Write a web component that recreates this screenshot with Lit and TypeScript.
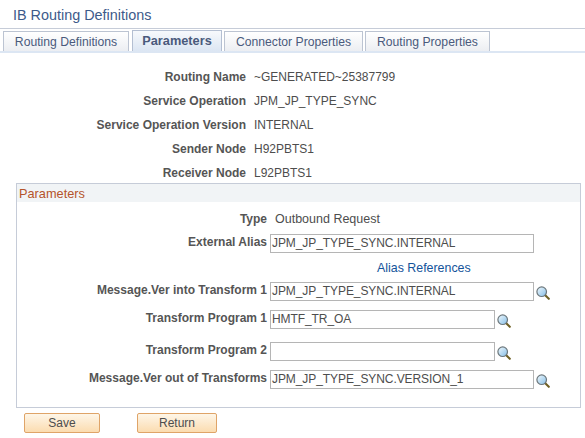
import { LitElement, html, css } from "lit";
import { customElement } from "lit/decorators.js";

const lens = html`<svg class="lens" width="14" height="14" viewBox="0 0 14 14" aria-hidden="true">
  <defs><linearGradient id="g" x1="0" y1="0" x2="1" y2="1"><stop offset="0" stop-color="#f2fafe"></stop><stop offset="1" stop-color="#84bde6"></stop></linearGradient></defs>
  <line x1="9" y1="9" x2="12.8" y2="12.8" stroke="#6f6024" stroke-width="2.1" stroke-linecap="round"></line>
  <circle cx="5.7" cy="5.7" r="4.8" fill="url(#g)" stroke="#6c777c" stroke-width="1.2"></circle>
</svg>`;

@customElement("app-root")
export class AppRoot extends LitElement {
  static styles = css`
    :host { display: block; width: 585px; height: 438px; background: #fff; overflow: hidden;
      font-family: "Liberation Sans", Arial, sans-serif; font-size: 12px; color: #4d4d4d; }
    .title { box-sizing: border-box; height: 29px; padding: 6px 0 0 13px; font-size: 14.4px; line-height: 18px; color: #3d5a8a; border-bottom: 1px solid #c6ccd8; }
    .tabs { display: flex; align-items: flex-end; padding-left: 3px; gap: 2px; border-bottom: 2px solid #dce6f3; height: 22px; }
    .tab { box-sizing: border-box; height: 20px; border: 1px solid #bcc4d2; border-bottom: none; line-height: 20px; font-size: 12.2px; text-align: center; color: #4a5a7c; background: linear-gradient(#fff, #eceef2); white-space: nowrap; }
    .t1 { width: 126px; } .t3 { width: 139px; } .t4 { width: 125px; }
    .tab.active { width: 90px; margin-left: 1px; height: 21px; font-size: 12.75px; font-weight: bold; background: linear-gradient(#f7f9fc, #dce6f3); border-color: #b4bfd2; line-height: 19px; }
    .info { display: grid; grid-template-columns: 246px auto; column-gap: 8px; grid-auto-rows: 24px; padding-top: 12px; align-items: center; }
    .lbl { text-align: right; font-weight: bold; color: #555; white-space: nowrap; }
    .val { white-space: nowrap; }
    .panel { box-sizing: border-box; margin: -2px 0 0 16px; width: 565px; height: 225px; border: 1px solid #c6ccd8; }
    .phead { height: 18px; background: #f1f4f6; color: #b5532a; line-height: 19px; padding-left: 2px; font-size: 12.75px; }
    .form { display: grid; grid-template-columns: 250px auto; column-gap: 3px; padding-top: 8px; align-items: start; }
    .row { display: flex; gap: 2px; }
    .inp { box-sizing: border-box; height: 19px; border: 1px solid #b5b5b5; background: #fff; line-height: 17px; padding-left: 1px; white-space: nowrap; color: #4d4d4d; letter-spacing: -0.08px; }
    .w1 { width: 264px; } .w2 { width: 225px; }
    .lens { display: block; flex: none; margin-top: 4px; }
    .link { color: #14539a; padding-left: 107px; font-size: 12.4px; line-height: 20px; }
    .h-type { height: 18px; line-height: 18px; margin-bottom: 6px; }
    .h-type.val { padding-left: 5px; font-size: 12.5px; }
    .h-ext { height: 19px; line-height: 16px; margin-bottom: 5px; }
    .h-link { height: 24px; }
    .h-a { height: 19px; line-height: 16px; margin-bottom: 9px; }
    .h-b { height: 19px; line-height: 16px; margin-bottom: 13px; }
    .h-c { height: 19px; line-height: 16px; margin-bottom: 9px; }
    .actions { display: flex; padding: 5px 0 0 24px; gap: 37px; }
    .btn { box-sizing: border-box; height: 20px; border: 1px solid #dfa468; border-radius: 2px; background: linear-gradient(#fef6e8, #fbdcb0); color: #4d4d4d; font-size: 12px; line-height: 18px; text-align: center; }
    .save { width: 76px; } .ret { width: 80px; }
  `;

  render() {
    const info = [
      ["Routing Name", "~GENERATED~25387799"],
      ["Service Operation", "JPM_JP_TYPE_SYNC"],
      ["Service Operation Version", "INTERNAL"],
      ["Sender Node", "H92PBTS1"],
      ["Receiver Node", "L92PBTS1"],
    ];
    return html`
      <div class="title">IB Routing Definitions</div>
      <div class="tabs">
        <div class="tab t1">Routing Definitions</div>
        <div class="tab active">Parameters</div>
        <div class="tab t3">Connector Properties</div>
        <div class="tab t4">Routing Properties</div>
      </div>
      <div class="info">
        ${info.map(([l, v]) => html`<div class="lbl">${l}</div><div class="val">${v}</div>`)}
      </div>
      <div class="panel">
        <div class="phead">Parameters</div>
        <div class="form">
          <div class="lbl h-type">Type</div><div class="val h-type">Outbound Request</div>
          <div class="lbl h-ext">External Alias</div>
          <div class="row h-ext"><div class="inp w1">JPM_JP_TYPE_SYNC.INTERNAL</div></div>
          <div class="h-link"></div><div class="link h-link">Alias References</div>
          <div class="lbl h-a">Message.Ver into Transform 1</div>
          <div class="row h-a"><div class="inp w1">JPM_JP_TYPE_SYNC.INTERNAL</div>${lens}</div>
          <div class="lbl h-b">Transform Program 1</div>
          <div class="row h-b"><div class="inp w2">HMTF_TR_OA</div>${lens}</div>
          <div class="lbl h-c">Transform Program 2</div>
          <div class="row h-c"><div class="inp w2"></div>${lens}</div>
          <div class="lbl h-c">Message.Ver out of Transforms</div>
          <div class="row h-c"><div class="inp w1">JPM_JP_TYPE_SYNC.VERSION_1</div>${lens}</div>
        </div>
      </div>
      <div class="actions">
        <div class="btn save">Save</div>
        <div class="btn ret">Return</div>
      </div>
    `;
  }
}
